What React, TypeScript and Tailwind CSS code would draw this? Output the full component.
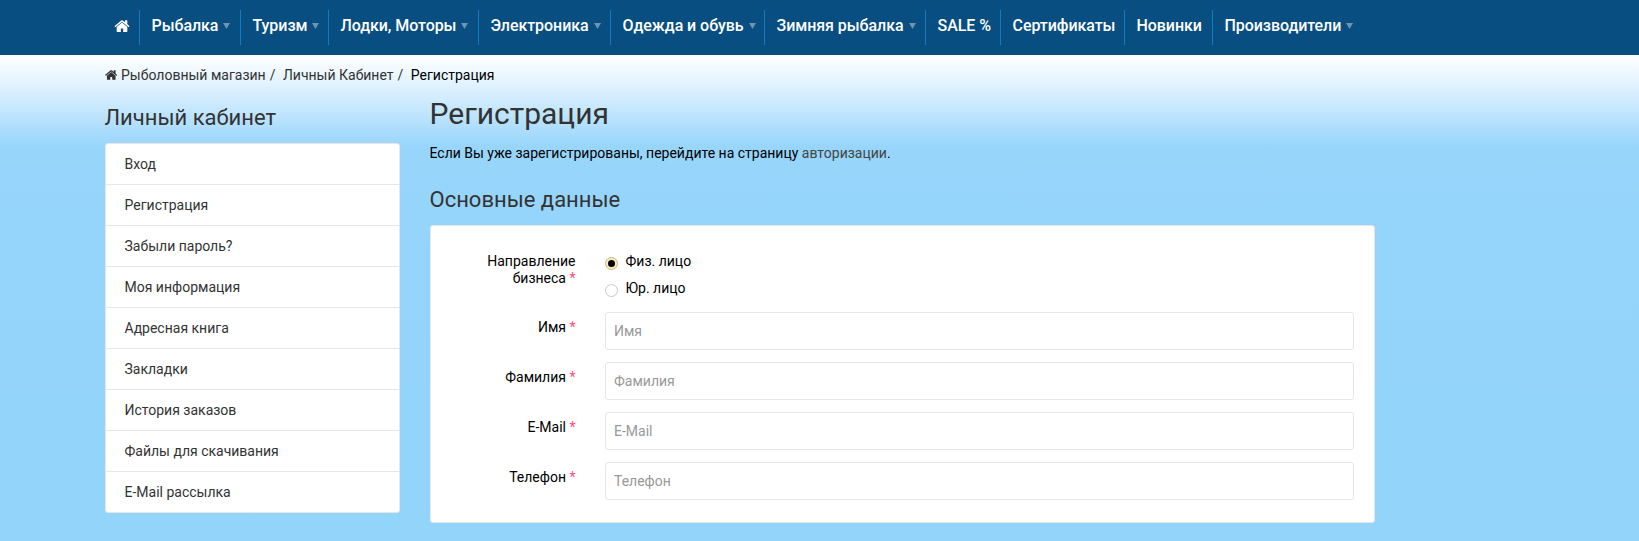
import React from "react";

type NavItem = { label: string; menu?: boolean; width: string };

const nav: NavItem[] = [
  { label: "Рыбалка", menu: true, width: "w-[101px]" },
  { label: "Туризм", menu: true, width: "w-[88px]" },
  { label: "Лодки, Моторы", menu: true, width: "w-[150px]" },
  { label: "Электроника", menu: true, width: "w-[132px]" },
  { label: "Одежда и обувь", menu: true, width: "w-[154px]" },
  { label: "Зимняя рыбалка", menu: true, width: "w-[161px]" },
  { label: "SALE %", width: "w-[75px]" },
  { label: "Сертификаты", width: "w-[124px]" },
  { label: "Новинки", width: "w-[88px]" },
  { label: "Производители", menu: true, width: "w-[152px]" },
];

const account = [
  "Вход",
  "Регистрация",
  "Забыли пароль?",
  "Моя информация",
  "Адресная книга",
  "Закладки",
  "История заказов",
  "Файлы для скачивания",
  "E-Mail рассылка",
];

const fields = ["Имя", "Фамилия", "E-Mail", "Телефон"];

function HomeIcon({ className }: { className: string }) {
  return (
    <svg viewBox="0 0 1664 1408" className={className} fill="currentColor" aria-hidden="true">
      <path d="M1408 864v480q0 26-19 45t-45 19H960v-384H704v384H320q-26 0-45-19t-19-45V864q0-1 .5-3t.5-3l575-474 575 474q1 2 1 6zm223-69l-62 74q-8 9-21 11h-3q-13 0-21-7L832 296 140 873q-12 8-24 7-13-2-21-11l-62-74q-8-10-7-23.500t11-21.500l719-599q32-26 76-26t76 26l244 204V160q0-14 9-23t23-9h192q14 0 23 9t9 23v408l219 182q10 8 11 21.500t-7 23.500z" />
    </svg>
  );
}

function Required() {
  return <span className="text-[#ff4d7a]"> *</span>;
}

export default function App() {
  return (
    <div className="h-[541px] overflow-hidden bg-[#94d4fa] font-['Roboto',sans-serif] text-sm text-black">
      <header className="flex h-[55px] bg-[#084e80] pt-2.5 pl-[105px] text-base font-medium tracking-[-0.06px] text-white">
        <a className="flex h-[35px] w-[35px] shrink-0 border-r border-[#107cc9] pt-[9px] pl-[9px]">
          <HomeIcon className="h-[13px] w-4" />
        </a>
        {nav.map((item, i) => (
          <a
            key={item.label}
            className={`flex h-[35px] shrink-0 pt-1 pl-[11.5px] whitespace-nowrap ${item.width} ${
              i < nav.length - 1 ? "border-r border-[#107cc9]" : ""
            }`}
          >
            {item.label}
            {item.menu && (
              <svg viewBox="0 0 7 6" className="mt-[9px] ml-[5px] h-1.5 w-[7px]" fill="#6b95b3">
                <path d="M0 0h7L3.500 6z" />
              </svg>
            )}
          </a>
        ))}
      </header>

      <div className="h-[486px] bg-[linear-gradient(180deg,#ffffff_0px,#dcf0fe_35px,#97d5fb_92px,#92d4fa_486px)] pl-[104.5px]">
        <nav className="flex h-[41px] items-start pt-[10px] leading-[21px] text-[#333333]">
          <HomeIcon className="mt-[4px] mr-1 h-[11px] w-[12.5px]" />
          <a>Рыболовный магазин</a>
          <span className="mr-[7.5px] ml-1">/</span>
          <a>Личный Кабинет</a>
          <span className="mr-[7.5px] ml-1">/</span>
          <span className="text-black">Регистрация</span>
        </nav>

        <div className="flex">
          <aside className="w-[295px]">
            <h2 className="h-[47px] pt-2 text-[22px] leading-[28px] text-[#333333]">Личный кабинет</h2>
            <ul className="divide-y divide-[#e6e6e6] rounded-[3px] border border-[#e6e6e6] bg-white text-[#333333]">
              {account.map((label) => (
                <li key={label} className="h-[41px] pl-[19px] leading-[41px] last:h-10">
                  {label}
                </li>
              ))}
            </ul>
          </aside>

          <main className="ml-[30px] w-[945px]">
            <h1 className="h-[47px] pt-px text-[30px] leading-[34px] text-[#333333]">Регистрация</h1>
            <p className="h-[42px] leading-[21px]">
              Если Вы уже зарегистрированы, перейдите на страницу <a className="text-[#444444]">авторизации</a>.
            </p>
            <h3 className="h-10 pt-px text-[22px] leading-[28px] text-[#333333]">Основные данные</h3>
            <form className="h-[298px] rounded-[3px] border border-[#e6e6e6] bg-white pt-[26px] pr-5">
              <div className="flex h-[60px]">
                <div className="w-[145px] pt-[1px] text-right leading-[17px]">
                  Направление
                  <br />
                  бизнеса
                  <Required />
                </div>
                <div className="ml-[29px]">
                  <label className="flex h-[27px]">
                    <span className="mt-[5px] mr-2 flex size-[13px] items-center justify-center rounded-full border border-[#c9b68d] bg-[#fce9c0]">
                      <span className="size-[7px] rounded-full bg-black" />
                    </span>
                    <span className="leading-[19px]">Физ. лицо</span>
                  </label>
                  <label className="flex h-[27px]">
                    <span className="mt-[5px] mr-2 size-[13px] rounded-full border border-[#c8c8c8] bg-white" />
                    <span className="leading-[19px]">Юр. лицо</span>
                  </label>
                </div>
              </div>
              {fields.map((label) => (
                <div key={label} className="mb-3 flex h-[38px]">
                  <label className="w-[145px] pt-[6px] text-right leading-[19px]">
                    {label}
                    <Required />
                  </label>
                  <input
                    placeholder={label}
                    className="ml-[29px] h-[38px] flex-1 rounded-[3px] border border-[#e6e6e6] bg-white px-[8.5px] placeholder:text-[#999999]"
                  />
                </div>
              ))}
            </form>
          </main>
        </div>
      </div>
    </div>
  );
}
